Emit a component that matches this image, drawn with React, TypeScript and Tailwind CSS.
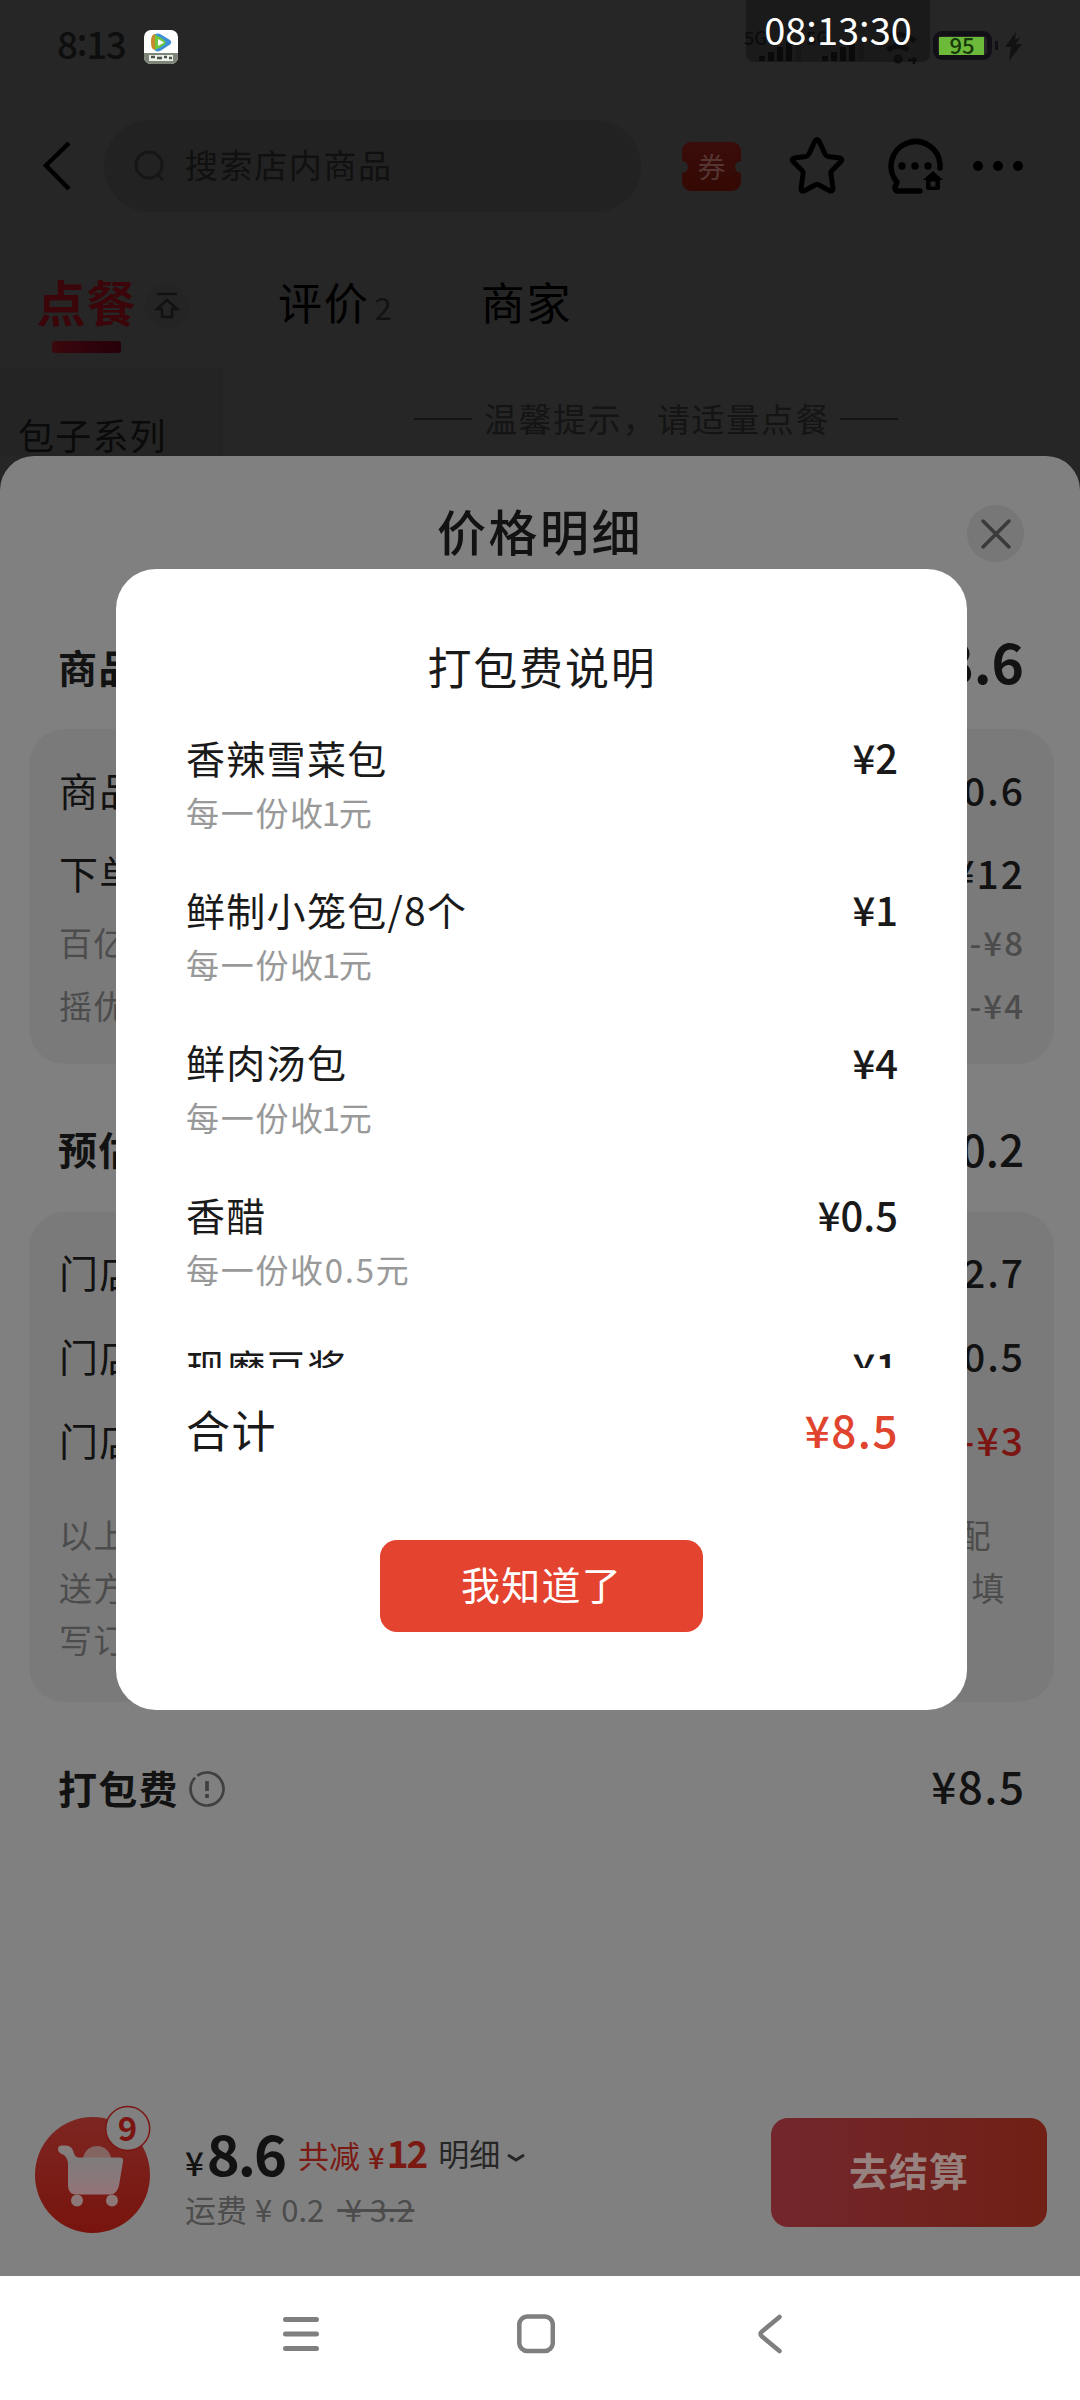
import React from "react";

const FONT = "font-['Noto_Sans_CJK_SC',sans-serif]";

function VideoAppIcon() {
  return (
    <svg width="34" height="34" viewBox="0 0 34 34">
      <rect width="34" height="34" rx="7" fill="#fff" />
      <path d="M0 23h34v4a7 7 0 0 1-7 7H7a7 7 0 0 1-7-7z" fill="#7d8478" />
      <path d="M5 25h24v6H5z" fill="#eef0ea" />
      <path d="M7 27h4M13 28h5M20 27h3M25 28h3" stroke="#4d544a" strokeWidth="2.500" />
      <path d="M11 4q-4 0-4 8t4 8z" fill="#c98a2b" />
      <path d="M11 4.500q2-2 6 0l9 5.500q2.500 2 0 4.500l-9 6q-4 2-6 0z" fill="#3d8fd6" />
      <path d="M11 5q2 0 9 5q3 2.500 0 5q-6 4-9 4.500z" fill="#6cc63f" />
      <path d="M14 9l6 3.500-6 3.500z" fill="#fff" />
    </svg>
  );
}

function SignalBars() {
  return (
    <svg width="46" height="26" viewBox="0 0 46 26" fill="#0a0a0a">
      <rect x="1" y="21" width="6" height="5" rx="1" />
      <rect x="10" y="17" width="6" height="9" rx="1" />
      <rect x="19" y="12" width="6" height="14" rx="1" />
      <rect x="28" y="7" width="6" height="19" rx="1" />
      <rect x="38" y="2" width="5" height="24" rx="1" fill="#161616" />
    </svg>
  );
}

function StatusBar() {
  return (
    <div className="relative flex h-[120px] items-start">
      <div className="mt-[19px] ml-[57px] flex h-[50px] w-[70px] items-center text-[37px] font-medium tracking-[-1.500px] text-[#0e0e0e]">
        8<span className="relative -top-[3px]">:</span>13
      </div>
      <div className="mt-[30px] ml-[17px]">
        <VideoAppIcon />
      </div>
      <div className="absolute top-0 left-[746px] h-[62px] w-[184px] rounded-b-[8px] bg-[#1a1a1a]" />
      <div className="absolute top-[26px] left-[744px] text-[18px] leading-[22px] font-medium text-[#0c0c0c]">5G</div>
      <div className="absolute top-[26px] left-[806px] text-[18px] leading-[22px] font-medium text-[#0c0c0c]">5G</div>
      <div className="absolute top-[35px] left-[758px]"><SignalBars /></div>
      <div className="absolute top-[35px] left-[821px]"><SignalBars /></div>
      <svg className="absolute top-[31px] left-[878px]" width="42" height="34" viewBox="0 0 42 34" fill="none" stroke="#0c0c0c" strokeWidth="5">
        <path d="M3 10q17-13 34 0" />
        <path d="M10 19q10-8 20 0" />
        <circle cx="20" cy="28" r="2" />
        <path d="M30 29h9M36 26v7" strokeWidth="2.500" />
      </svg>
      <div className="absolute top-0 left-[746px] flex h-[60px] w-[184px] items-center justify-center pb-[4px] text-[38px] text-white">
        08<span className="relative -top-[3px]">:</span>13<span className="relative -top-[3px]">:</span>30
      </div>
      <div className="absolute top-[31px] left-[933px] flex h-[29px] w-[59px] items-center rounded-[9px] border-[5px] border-[#121016] bg-[#262626] px-px">
        <div className="flex h-[18px] w-[45px] items-center justify-center bg-[#6db93a] pb-[3px] pl-px text-[22px] leading-none font-medium text-[#16380a]">
          95
        </div>
      </div>
      <div className="absolute top-[41px] left-[995px] h-[9px] w-[3px] bg-[#121016]" />
      <svg className="absolute top-[32px] left-[1005px]" width="17" height="29" viewBox="0 0 17 29" fill="#121212">
        <path d="M11 0 0 15h6L4 29 17 12h-6L15 5 10 8z" />
      </svg>
    </div>
  );
}

function Header() {
  return (
    <div className="flex h-[92px] items-center">
      <svg className="ml-[40px]" width="34" height="54" viewBox="0 0 34 54" fill="none" stroke="#000" strokeWidth="4.500">
        <path d="M29 4 6 26.500 29 50" />
      </svg>
      <div className="ml-[30px] flex h-[92px] w-[537px] items-center rounded-full bg-[#222222]">
        <svg className="ml-[29px]" width="32" height="36" viewBox="0 0 32 36" fill="none" stroke="#161616" strokeWidth="3">
          <circle cx="16" cy="17" r="13" />
          <path d="m25 27 5 5" />
        </svg>
        <div className="-mt-[2px] ml-[20px] text-[33px] tracking-[1.600px] text-[#101010]">搜索店内商品</div>
      </div>
      <div className="relative ml-[41px] flex h-[49px] w-[59px] items-center justify-center overflow-hidden rounded-[9px] bg-gradient-to-b from-[#3a0c0b] to-[#340903]">
        <div className="absolute top-[19px] -left-[6px] size-[12px] rounded-full bg-[#262626]" />
        <div className="absolute top-[19px] -right-[6px] size-[12px] rounded-full bg-[#262626]" />
        <span className="text-[28px] leading-none text-[#543532]">券</span>
      </div>
      <svg className="ml-[47px]" width="58" height="60" viewBox="0 0 58 60" fill="none" stroke="#000" strokeWidth="5" strokeLinejoin="round">
        <path d="M27 5q2-3 4 0l6 13q1 2 3 2.500l12 1.500q3 1 1 3.500l-9 9q-1.500 1.500-1 4l2 14q0 3-3 2.500l-11-6q-2-1-4 0l-11 6q-3 1-3-2.500l2-14q.500-2.500-1-4l-9-9q-2-2.500 1-3.500l12-1.500q2-.500 3-2.500z" />
      </svg>
      <svg className="ml-[39px]" width="60" height="60" viewBox="0 0 60 60" fill="none" stroke="#000" strokeWidth="5.500">
        <path d="M55 32v-4a24.500 24.500 0 1 0-43 18l-2 5q0 4 3 4h22" strokeLinejoin="round" strokeLinecap="round" />
        <g fill="#000" stroke="none">
          <circle cx="17" cy="30" r="3.700" />
          <circle cx="30" cy="30" r="3.700" />
          <circle cx="43" cy="30" r="3.700" />
          <path d="M48 35 58 44h-3v8q0 2-2 2H43q-2 0-2-2v-8h-3z" />
        </g>
        <path d="M45.500 45.500h5v5h-5z" fill="#262626" stroke="none" />
      </svg>
      <div className="ml-[28px] flex gap-[10px]">
        <div className="size-[10px] rounded-full bg-black" />
        <div className="size-[10px] rounded-full bg-black" />
        <div className="size-[10px] rounded-full bg-black" />
      </div>
    </div>
  );
}

function Tabs() {
  return (
    <div className="flex h-[156px] items-start pt-[64px] text-[44px] text-black">
      <div className="ml-[36px] flex w-[101px] flex-col items-center">
        <div className="h-[60px] text-[49px] leading-[50px] font-bold tracking-[1px] text-[#3c0509]">点餐</div>
        <div className="mt-[5px] h-[12px] w-[69px] rounded-[3px] bg-gradient-to-r from-[#3b090e] to-[#260008]" />
      </div>
      <div className="mt-[8px] ml-[8px] flex size-[44px] items-center justify-center rounded-full bg-[#242424]">
        <svg width="26" height="28" viewBox="0 0 26 28" fill="none" stroke="#121212" strokeWidth="2.500">
          <path d="M3 2h20M13 8 3 17h5v8h10v-8h5z" />
        </svg>
      </div>
      <div className="ml-[89px] flex items-baseline leading-[50px] tracking-[1.800px]">
        评价<span className="ml-[5px] text-[31px] text-[#121212]">2</span>
      </div>
      <div className="ml-[87px] leading-[50px] tracking-[1.800px]">商家</div>
    </div>
  );
}

function MenuPeek() {
  return (
    <div className="flex h-[88px]">
      <div className="w-[223px] bg-[#242424] pt-[46px] pl-[18px] text-[36px] leading-[40px] tracking-[1.200px] text-[#0a0a0a]">包子系列</div>
      <div className="flex flex-1 items-start justify-center pt-[28px] pl-[9px]">
        <div className="mt-[22px] h-[2px] w-[58px] bg-[#141414]" />
        <div className="mr-[10px] ml-[12px] text-[33px] leading-[44px] tracking-[1.600px] text-[#141414]">温馨提示，请适量点餐</div>
        <div className="mt-[22px] h-[2px] w-[58px] bg-[#141414]" />
      </div>
    </div>
  );
}

type RowProps = { label: string; value: string; className: string; valueClass?: string };

function Row({ label, value, className, valueClass = "" }: RowProps) {
  return (
    <div className={`flex items-center justify-between ${className}`}>
      <span className="tracking-[1.300px]">{label}</span>
      <span className={`-mr-[2px] font-medium tracking-[2px] ${valueClass}`}>{value}</span>
    </div>
  );
}

function PriceSheet() {
  return (
    <div className="flex h-[1820px] flex-col rounded-t-[34px] bg-[#808080] text-[#121212]">
      <div className="relative flex h-[148px] items-center justify-center">
        <div className="text-[49px] font-medium tracking-[2.500px]">价格明细</div>
        <div className="absolute top-[49px] right-[56px] flex size-[57px] items-center justify-center rounded-full bg-[#777777]">
          <svg width="32" height="32" viewBox="0 0 32 32" stroke="#3a3a3a" strokeWidth="3.500" strokeLinecap="round">
            <path d="m3 3 26 26M29 3 3 29" />
          </svg>
        </div>
      </div>
      <div className="flex h-[125px] items-center justify-between pr-[56px] pl-[58px]">
        <span className="text-[39px] font-bold tracking-[1.500px]">商品</span>
        <span className="-mt-[12px] text-[55px] font-bold">¥8.6</span>
      </div>
      <div className="mr-[26px] ml-[29px] h-[335px] rounded-[36px] bg-[#7a7a7a] pt-[20px] pr-[31px] pl-[30px]">
        <Row label="商品" value="¥20.6" className="h-[80px] text-[39px]" />
        <Row label="下单" value="¥12" className="h-[87px] text-[39px]" />
        <Row label="百亿" value="-¥8" className="h-[54px] text-[33px] text-[#4c4c4c]" />
        <Row label="摇优" value="-¥4" className="h-[71px] text-[33px] text-[#4c4c4c]" />
      </div>
      <div className="flex h-[148px] items-center justify-between pt-[20px] pr-[56px] pl-[58px]">
        <span className="text-[39px] font-bold tracking-[1.500px]">预估</span>
        <span className="text-[44px] font-medium">¥0.2</span>
      </div>
      <div className="mr-[26px] ml-[29px] h-[490px] rounded-[36px] bg-[#7a7a7a] pt-[19px] pr-[31px] pl-[30px]">
        <Row label="门店" value="¥2.7" className="h-[81px] text-[39px]" />
        <Row label="门店" value="¥0.5" className="h-[86px] text-[39px]" />
        <Row label="门店" value="-¥3" className="h-[83px] text-[39px]" valueClass="text-[#7a1512]" />
        <div className="mt-[27px] text-[33px] leading-[52.500px] tracking-[1.600px] text-[#4c4c4c]">
          <div className="flex justify-between pr-[31px]"><span>以上</span><span>配</span></div>
          <div className="flex justify-between pr-[17px]"><span>送方</span><span>填</span></div>
          <div>写订</div>
        </div>
      </div>
      <div className="flex h-[170px] items-center justify-between pr-[56px] pl-[58px]">
        <div className="flex items-center gap-[10px] text-[39px] font-bold tracking-[1.200px]">
          打包费
          <svg className="mt-[3px]" width="36" height="36" viewBox="0 0 36 36" fill="none" stroke="#404040" strokeWidth="2.700">
            <circle cx="18" cy="18" r="16.500" strokeDasharray="100 3.700" transform="rotate(-126 18 18)" />
            <path d="M18 10v10M18 23v4" strokeWidth="3.700" />
          </svg>
        </div>
        <span className="-mt-[4px] -mr-[1.500px] text-[44px] font-medium tracking-[1.500px]">¥8.5</span>
      </div>
      <CheckoutBar />
    </div>
  );
}

function CartIcon() {
  return (
    <svg width="120" height="134" viewBox="0 0 120 134">
      <defs>
        <linearGradient id="disc" x1="0" y1="0" x2="0" y2="1">
          <stop offset="0" stopColor="#7d2622" />
          <stop offset="1" stopColor="#78140d" />
        </linearGradient>
        <linearGradient id="basket" x1="0" y1="0" x2="0" y2="1">
          <stop offset="0" stopColor="#8a7f7f" />
          <stop offset="0.3" stopColor="#7f7c7c" />
          <stop offset="1" stopColor="#937377" />
        </linearGradient>
      </defs>
      <ellipse cx="57.500" cy="73" rx="57.500" ry="58" fill="url(#disc)" />
      <circle cx="62" cy="58" r="14" fill="#836461" />
      <path d="M23 47q0-3.500 4-3.500h3q6 0 8 5l1 3q1.500 4 5 4h40q5 0 4 4l-4 24q-2 9-9 9H41q-7 0-8-8V62q0-5-4-9q-6-2-6-6z" fill="url(#basket)" />
      <circle cx="42" cy="98.500" r="6" fill="#8c7876" />
      <circle cx="77" cy="98.500" r="6" fill="#8c7876" />
      <circle cx="92.700" cy="26.500" r="22" fill="#808080" stroke="#7a1512" strokeWidth="1.500" />
    </svg>
  );
}

function CheckoutBar() {
  return (
    <div className="mt-auto flex h-[174px] items-start">
      <div className="relative ml-[35px]">
        <CartIcon />
        <span className="absolute top-[6px] left-[82px] w-[21px] text-center text-[33px] leading-[38px] font-bold text-[#7a1512]">9</span>
      </div>
      <div className="mt-[18px] ml-[30px] flex-1">
        <div className="flex h-[68px] items-baseline leading-[64px]">
          <span className="text-[33px] font-medium">¥</span>
          <span className="ml-[3px] text-[56px] font-bold tracking-[-2px]">8.6</span>
          <span className="relative -top-[8px] ml-[13px] text-[31px] text-[#7a1a12]">共减</span>
          <span className="relative -top-[7px] ml-[8px] text-[29px] font-medium text-[#7a1a12]">¥</span>
          <span className="relative -top-[8px] ml-[2px] text-[37px] font-bold tracking-[-2px] text-[#7a1a12]">12</span>
          <span className="relative -top-[10px] ml-[12px] text-[31px] text-[#262626]">明细</span>
          <svg className="ml-[6px] -translate-y-[13px]" width="20" height="10" viewBox="0 0 20 10" fill="none" stroke="#262626" strokeWidth="3">
            <path d="m2 2 8 5 8-5" />
          </svg>
        </div>
        <div className="flex h-[43px] items-center text-[31px] text-[#4c4c4c]">
          <span>运费</span>
          <span className="ml-[8px]">¥</span>
          <span className="ml-[9px]">0.2</span>
          <span className="ml-[13px] tracking-[0.500px] line-through decoration-[3px]">&nbsp;¥ 3.2</span>
        </div>
      </div>
      <div className="mt-[16px] mr-[33px] flex h-[109px] w-[276px] items-center justify-center rounded-[17px] bg-gradient-to-r from-[#73262c] to-[#702014] pb-[6px] text-[39px] font-bold tracking-[1px] text-[#97827f]">
        去结算
      </div>
    </div>
  );
}

function NavBar() {
  return (
    <div className="flex h-[124px] items-start bg-white pt-[37px]">
      <svg className="ml-[283px]" width="36" height="44" viewBox="0 0 36 44" stroke="#7f7f7f" strokeWidth="5" strokeLinecap="round">
        <path d="M2.500 6.500h31M2.500 21h31M2.500 35.500h31" />
      </svg>
      <svg className="ml-[198px]" width="38" height="42" viewBox="0 0 38 42" fill="none" stroke="#7f7f7f" strokeWidth="4.500">
        <rect x="2.300" y="3.500" width="33.500" height="34.500" rx="8" />
      </svg>
      <svg className="ml-[203px]" width="26" height="44" viewBox="0 0 26 44" fill="none" stroke="#7f7f7f" strokeWidth="4.500" strokeLinecap="round">
        <path d="M21.500 4 4 18.500q-3 2.500 0 5L21.500 38" />
      </svg>
    </div>
  );
}

const FEES = [
  { name: "香辣雪菜包", unit: "1", price: "¥2" },
  { name: "鲜制小笼包/8个", unit: "1", price: "¥1" },
  { name: "鲜肉汤包", unit: "1", price: "¥4" },
  { name: "香醋", unit: "0.5", price: "¥0.5" },
  { name: "现磨豆浆", unit: "1", price: "¥1" },
];

function PackagingModal() {
  return (
    <div className="absolute top-[569px] left-[116px] flex h-[1141px] w-[851px] flex-col rounded-[40px] bg-white pr-[69px] pl-[70px] text-[#1a1a1a]">
      <div className="mt-[65px] flex h-[64px] items-center justify-center text-[44px] tracking-[1.800px]">打包费说明</div>
      <div className="mt-[30px] h-[640px] overflow-hidden">
        {FEES.map((fee) => (
          <div key={fee.name} className="h-[152.300px]">
            <div className="flex h-[58px] items-center justify-between text-[39px]">
              <span className="tracking-[1.300px]">{fee.name}</span>
              <span className="text-[40px] font-medium">{fee.price}</span>
            </div>
            <div className="text-[33px] leading-[52px] tracking-[1.700px] text-[#999999]">
              每一份收<span className={fee.unit === "1" ? "-mx-[3px]" : ""}>{fee.unit}</span>元
            </div>
          </div>
        ))}
      </div>
      <div className="mt-[29px] flex h-[64px] items-center justify-between text-[44px]">
        <span className="tracking-[1.600px]">合计</span>
        <span className="-mr-px font-medium tracking-[1.500px] text-[#e0442f]">¥8.5</span>
      </div>
      <div className="mt-[79px] ml-[194px] flex h-[92px] w-[323px] items-center justify-center rounded-[17px] bg-[#e4432f] pb-[5px] text-[39px] tracking-[1.300px] text-white">
        我知道了
      </div>
    </div>
  );
}

export default function App() {
  return (
    <div className={`relative h-[2400px] w-[1080px] overflow-hidden bg-[#262626] ${FONT}`}>
      <StatusBar />
      <Header />
      <Tabs />
      <MenuPeek />
      <PriceSheet />
      <NavBar />
      <PackagingModal />
    </div>
  );
}
